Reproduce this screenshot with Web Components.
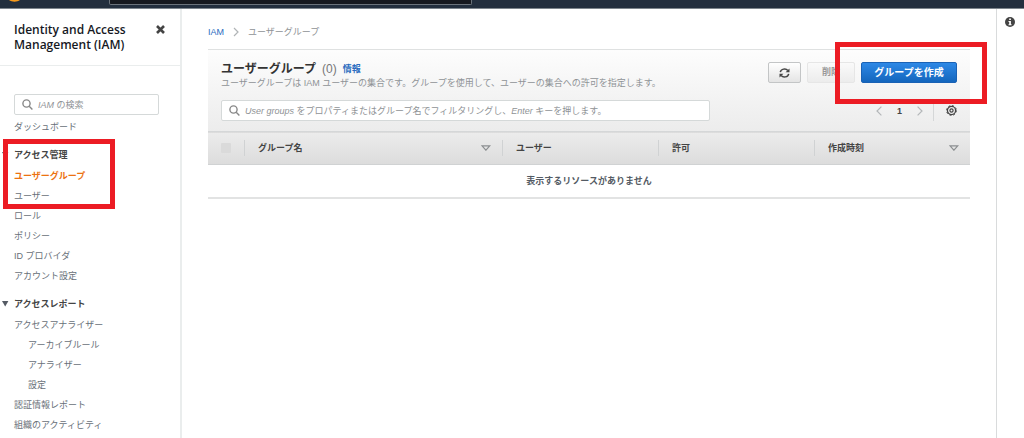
<!DOCTYPE html>
<html lang="ja">
<head>
<meta charset="utf-8">
<title>IAM ユーザーグループ</title>
<style>
  :root {
    --ink: #444;
    --muted: #687078;
    --soft: #8f9396;
    --link: #2a6cc0;
    --line: #e4e6e6;
    --mark: #ec1c24;
  }
  body {
    margin: 0;
    font: 9px/20px "Liberation Sans", "Noto Sans CJK JP", sans-serif;
    color: var(--muted);
    background: #fff;
    overflow: hidden;
  }
</style>
</head>
<body>
<iam-console></iam-console>

<script>
const define = (name, html, setup) => {
  const template = document.createElement('template');
  template.innerHTML = `<style>*{box-sizing:border-box}</style>${html}`;
  customElements.define(name, class extends HTMLElement {
    constructor() {
      super();
      this.attachShadow({ mode: 'open' }).append(template.content.cloneNode(true));
    }
    connectedCallback() { if (setup) setup(this, this.shadowRoot); }
  });
};

/* Global navigation bar */
define('top-bar', `
  <style>
    :host { display: flex; height: 9px; background: #232f3e; border-bottom: 1px solid #7d858c; overflow: hidden; }
    .logo { width: 109px; padding-left: 8px; }
    .find { flex: 0 1 363px; height: 5px; background: #16191f; border: 1px solid #6b737b; border-top: 0; border-radius: 0 0 2px 2px; }
    svg { display: block; }
  </style>
  <div class="logo"><svg width="14" height="3" viewBox="0 0 14 3"><path d="M1 0C4 2.2 9 2.2 12 0" fill="#f79a1c"/></svg></div>
  <div class="find"></div>
`);

/* Text field with a leading magnifier */
define('search-field', `
  <style>
    :host { display: block; }
    label { display: flex; align-items: center; gap: 5px; height: 21px; padding: 0 7px; background: #fff; border: 1px solid #d5d9d9; border-radius: 2px; }
    svg { flex: none; }
    input { flex: 1; min-width: 0; height: 19px; border: 0; padding: 0; outline: 0; background: none; font: inherit; color: #444; }
    input::placeholder { color: #8f9396; opacity: 1; font-style: italic; font-synthesis: none; }
  </style>
  <label>
    <svg width="11" height="11" viewBox="0 0 11 11" fill="none" stroke="#888" stroke-width="1.4"><circle cx="4.5" cy="4.5" r="3.6"/><path d="M7.2 7.2l3.2 3.2"/></svg>
    <input type="text">
  </label>
`, (host, root) => {
  const input = root.querySelector('input');
  input.placeholder = host.getAttribute('hint');
  input.setAttribute('aria-label', host.getAttribute('hint'));
});

/* One link of the side navigation */
define('nav-item', `
  <style>
    :host { display: block; height: 20px; }
    :host([nested]) { padding-left: 14px; }
    a { color: var(--muted); text-decoration: none; white-space: nowrap; }
    :host([current]) a { color: #ec7211; font-weight: bold; }
  </style>
  <a href="#"><slot></slot></a>
`);

/* Collapsible group of links */
define('nav-group', `
  <style>
    :host { display: block; }
    summary { display: flex; align-items: center; height: 20px; margin: 0 0 1px -13px; list-style: none; font-weight: bold; color: var(--ink); }
    summary::-webkit-details-marker { display: none; }
    svg { margin-right: 5px; }
  </style>
  <details open>
    <summary><svg width="8" height="6" viewBox="0 0 8 6"><path d="M1 0h6.4L4.2 5.6z" fill="#545b64"/></svg><slot name="title"></slot></summary>
    <slot></slot>
  </details>
`);

define('side-nav', `
  <style>
    :host { display: block; border-right: 2px solid #eaeded; }
    header { display: flex; justify-content: space-between; align-items: flex-start; gap: 8px; height: 57px; padding: 13px 15px 0 14px; border-bottom: 1px solid #eaeded; }
    h2 { margin: 0; font: 600 12px/15px "Open Sans", "Noto Sans", sans-serif; color: #16191f; }
    button { border: 0; padding: 3px 0; background: none; line-height: 0; }
    nav { padding: 28px 0 0 14px; }
    search-field { margin: 0 21px 2px 0; }
    nav-group { margin-top: 8px; }
  </style>
  <header>
    <h2>Identity and Access Management (IAM)</h2>
    <button aria-label="閉じる"><svg width="9" height="9" viewBox="0 0 9 9" stroke="#444" stroke-width="2.6"><path d="M1 1l7 7M8 1L1 8"/></svg></button>
  </header>
  <nav>
    <search-field hint="IAM の検索"></search-field>
    <nav-item>ダッシュボード</nav-item>
    <nav-group>
      <span slot="title">アクセス管理</span>
      <nav-item current>ユーザーグループ</nav-item>
      <nav-item>ユーザー</nav-item>
      <nav-item>ロール</nav-item>
      <nav-item>ポリシー</nav-item>
      <nav-item>ID プロバイダ</nav-item>
      <nav-item>アカウント設定</nav-item>
    </nav-group>
    <nav-group>
      <span slot="title">アクセスレポート</span>
      <nav-item>アクセスアナライザー</nav-item>
      <nav-item nested>アーカイブルール</nav-item>
      <nav-item nested>アナライザー</nav-item>
      <nav-item nested>設定</nav-item>
      <nav-item>認証情報レポート</nav-item>
      <nav-item>組織のアクティビティ</nav-item>
    </nav-group>
  </nav>
`);

define('bread-crumbs', `
  <style>
    :host { display: flex; align-items: center; gap: 9px; height: 40px; padding-top: 6px; color: var(--soft); }
    a { color: var(--link); text-decoration: none; }
  </style>
  <a href="#">IAM</a>
  <svg width="6" height="10" viewBox="0 0 6 10" fill="none" stroke="#b0b4b6" stroke-width="1.2"><path d="M1 1l4 4-4 4"/></svg>
  <span>ユーザーグループ</span>
`);

/* Push button: normal, disabled or primary */
define('ui-button', `
  <style>
    :host { display: block; }
    button { display: flex; align-items: center; justify-content: center; width: 100%; height: 21px; padding: 0 10px; border: 1px solid #c3c5c6; border-radius: 2px; background: linear-gradient(#fff, #e4e4e4); color: #444; font: bold 9px/19px "Liberation Sans", "Noto Sans CJK JP", sans-serif; white-space: nowrap; }
    button:disabled { border-color: #e6e6e6; background: linear-gradient(#fafafa, #ececec); color: #999; }
    :host([primary]) button { border-color: #1a62b5; background: linear-gradient(#2d88e6, #1466bd); color: #fff; font-size: 10px; }
  </style>
  <button><slot></slot></button>
`, (host, root) => {
  const button = root.querySelector('button');
  button.disabled = host.hasAttribute('disabled');
  if (host.hasAttribute('label')) button.setAttribute('aria-label', host.getAttribute('label'));
});

define('page-turner', `
  <style>
    :host { display: flex; align-items: center; height: 21px; }
    button { display: flex; border: 0; padding: 0; background: none; color: #444; font: bold 9px/20px "Liberation Sans", sans-serif; }
    .num { margin: 0 15px; }
    .gear { height: 20px; align-items: center; margin-left: 10px; padding-left: 12px; border-left: 1px solid #d5d7d8; }
  </style>
  <button aria-label="前へ"><svg width="6" height="10" viewBox="0 0 6 10" fill="none" stroke="#b4b7b9" stroke-width="1.2"><path d="M5.4 .6L1 5l4.4 4.4"/></svg></button>
  <button class="num">1</button>
  <button aria-label="次へ"><svg width="6" height="10" viewBox="0 0 6 10" fill="none" stroke="#b4b7b9" stroke-width="1.2"><path d="M.6 .6L5 5 .6 9.4"/></svg></button>
  <button class="gear" aria-label="設定"><svg width="11" height="11" viewBox="0 0 11 11" fill="none" stroke="#444"><circle cx="5.5" cy="5.5" r="4.1" stroke-width="1.3"/><circle cx="5.5" cy="5.5" r="4.9" stroke-width="1" stroke-dasharray="1.9 1.95"/><circle cx="5.5" cy="5.5" r="1.6" stroke-width="1.2"/></svg></button>
`);

define('group-table', `
  <style>
    :host { display: block; }
    table { width: 100%; table-layout: fixed; border-collapse: collapse; border-bottom: 2px solid #e2e3e3; }
    .pick { width: 36px; }
    .mid { width: 156px; }
    thead tr { height: 33px; background: linear-gradient(#ececec, #dcdcdc); border-top: 1px solid #d5d7d8; border-bottom: 1px solid #d0d2d3; }
    th { padding: 0; text-align: left; color: var(--ink); line-height: 16px; }
    th > div { display: flex; align-items: center; justify-content: space-between; height: 16px; padding: 0 11px 0 13px; border-left: 1px solid #d0d2d3; }
    th.pick > div { border-left: 0; }
    input { appearance: none; width: 10px; height: 10px; margin: 0; background: #dadada; border-radius: 1px; }
    td { height: 33px; padding: 0; text-align: center; font-weight: bold; color: #545b64; }
  </style>
  <table>
    <thead><tr>
      <th class="pick"><div><input type="checkbox" aria-label="すべて選択" disabled></div></th>
      <th><div>グループ名 <svg width="10" height="6" viewBox="0 0 10 6" fill="none" stroke="#8c8f91" stroke-width="1.2"><path d="M1 .8h7.8L4.9 5.2z"/></svg></div></th>
      <th class="mid"><div>ユーザー</div></th>
      <th class="mid"><div>許可</div></th>
      <th class="mid"><div>作成時刻 <svg width="10" height="6" viewBox="0 0 10 6" fill="none" stroke="#8c8f91" stroke-width="1.2"><path d="M1 .8h7.8L4.9 5.2z"/></svg></div></th>
    </tr></thead>
    <tbody><tr><td colspan="5">表示するリソースがありません</td></tr></tbody>
  </table>
`);

define('group-panel', `
  <style>
    :host { display: block; }
    .head { height: 82px; padding: 12px 13px 0; border-top: 1px solid #dfe1e1; background: linear-gradient(#fdfdfd, #ececec); }
    .row { display: flex; align-items: flex-start; justify-content: space-between; gap: 10px; }
    .title { display: flex; align-items: center; gap: 6px; height: 14px; }
    h1 { margin: 0; font-size: 12px; line-height: 14px; color: #333; }
    .count { font-size: 12px; color: #777; }
    .title a { font-weight: bold; color: var(--link); text-decoration: none; }
    p { margin: 0; line-height: 14px; color: var(--soft); }
    .actions { display: flex; gap: 6px; }
    .refresh { width: 33px; }
    .delete { width: 48px; }
    .create { width: 96px; }
    .tools { margin-top: 10px; }
    .tools search-field { flex: 0 1 489px; }
  </style>
  <div class="head">
    <div class="row">
      <div>
        <div class="title"><h1>ユーザーグループ</h1><span class="count">(0)</span><a href="#">情報</a></div>
        <p>ユーザーグループは IAM ユーザーの集合です。グループを使用して、ユーザーの集合への許可を指定します。</p>
      </div>
      <div class="actions">
        <ui-button class="refresh" label="更新"><svg width="11" height="10" viewBox="0 0 11 10" fill="none" stroke="#444" stroke-width="1.5"><path d="M1.3 4.2C2 .8 6.8 0 8.8 2.5M9.7 5.8C9 9.2 4.2 10 2.2 7.5"/><path d="M10.5 .4v3.9H6.6zM.5 9.6V5.7h3.9z" fill="#444" stroke="none"/></svg></ui-button>
        <ui-button class="delete" disabled>削除</ui-button>
        <ui-button class="create" primary>グループを作成</ui-button>
      </div>
    </div>
    <div class="row tools">
      <search-field hint="User groups をプロパティまたはグループ名でフィルタリングし、Enter キーを押します。"></search-field>
      <page-turner></page-turner>
    </div>
  </div>
  <group-table></group-table>
`);

define('info-rail', `
  <style>
    :host { display: block; border-left: 1px solid #d9dbdc; padding: 8px 0 0 8px; }
    button { display: block; border: 0; padding: 0; background: none; line-height: 0; }
  </style>
  <button aria-label="情報"><svg width="10" height="10" viewBox="0 0 10 10"><circle cx="5" cy="5" r="5" fill="#444"/><path d="M4.2 1.4h1.7v1.5H4.2zM3.5 3.9h2.4v3.4h.7v1H3.5v-1h.7V4.9h-.7z" fill="#fff"/></svg></button>
`);

/* Red frame laid over the part it points out */
define('mark-frame', `
  <style>:host { display: block; position: absolute; box-sizing: border-box; border: 5px solid var(--mark); pointer-events: none; }</style>
`);

define('iam-console', `
  <style>
    :host { display: block; position: relative; }
    .body { display: grid; grid-template-columns: 182px minmax(0, 1fr) 28px; min-height: calc(100vh - 9px); }
    main { padding: 0 26px; }
    .menu { left: 3px; top: 139px; width: 112px; height: 70px; }
    .action { right: 37px; top: 42px; width: 152px; height: 62px; }
  </style>
  <top-bar></top-bar>
  <div class="body">
    <side-nav></side-nav>
    <main>
      <bread-crumbs></bread-crumbs>
      <group-panel></group-panel>
    </main>
    <info-rail></info-rail>
  </div>
  <mark-frame class="menu"></mark-frame>
  <mark-frame class="action"></mark-frame>
`);
</script>
</body>
</html>
